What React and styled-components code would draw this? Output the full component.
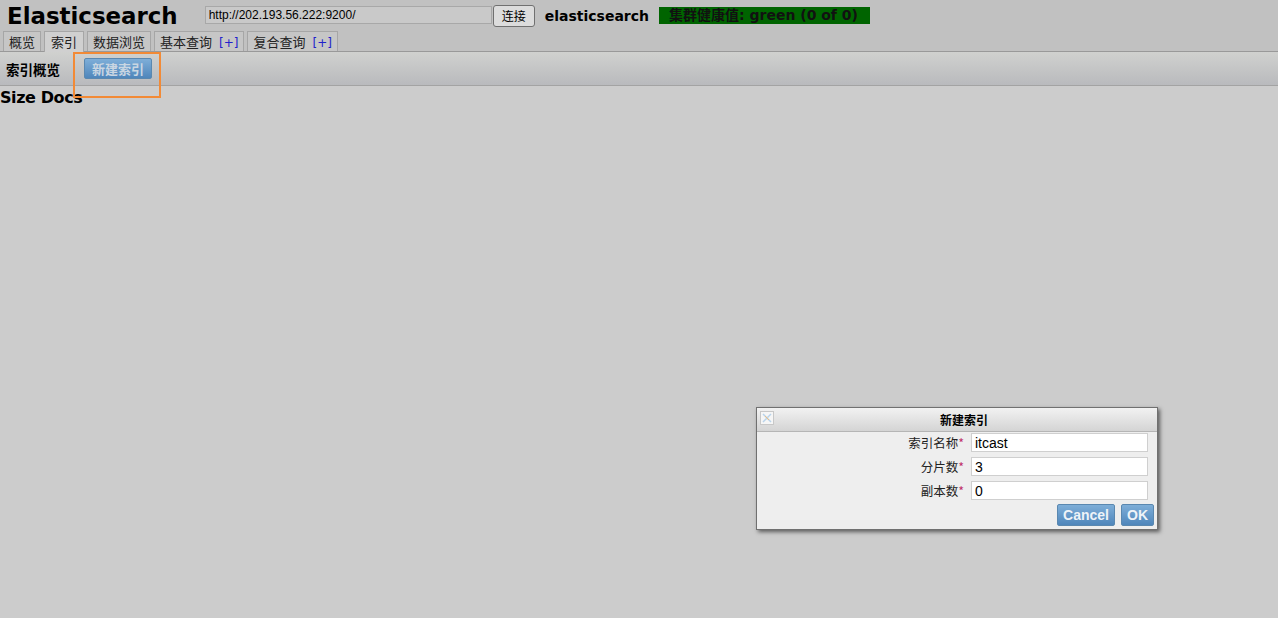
import styled, { createGlobalStyle } from 'styled-components';

const GlobalStyle = createGlobalStyle`
  html, body {
    margin: 0;
    padding: 0;
    background: #cccccc;
    font-family: "DejaVu Sans", Verdana, "Noto Sans CJK SC", sans-serif;
    font-size: 12px;
    color: #000;
  }
  * { box-sizing: border-box; }
`;

const Page = styled.div`
  position: relative;
  width: 1278px;
  height: 618px;
  overflow: hidden;
  background: #cccccc;
`;

const Header = styled.div`
  background: #c1c1c1;
  height: 52px;
  border-bottom: 1px solid #999;
  display: flex;
  flex-direction: column;
`;

const TopRow = styled.div`
  display: flex;
  align-items: center;
  height: 31px;
  padding-left: 7px;
`;

const Logo = styled.h1`
  margin: 0 27px 0 0;
  font-size: 22.9px;
  font-weight: bold;
  line-height: 30px;
`;

const UrlInput = styled.input`
  width: 287px;
  height: 18px;
  padding: 1px 3px;
  border: 1px solid #a8a8a8;
  background: #c9c9c9;
  font-family: "Liberation Sans", Arial, sans-serif;
  font-size: 12px;
  color: #000;
  margin-top: -1px;
`;

const ConnectButton = styled.button`
  height: 22px;
  margin-left: 1px;
  padding: 0 8px;
  border: 1px solid #707070;
  border-radius: 3px;
  background: #dcdcdc;
  font-family: "Noto Sans CJK SC", sans-serif;
  font-size: 12px;
  color: #000;
`;

const ClusterName = styled.span`
  margin-left: 10px;
  font-weight: bold;
  font-size: 14px;
`;

const Health = styled.span`
  margin-left: 10px;
  background: #006400;
  color: #111;
  font-weight: bold;
  font-size: 14px;
  line-height: 17px;
  padding: 0 10px;
  width: 211px;
  white-space: nowrap;
  font-family: "DejaVu Sans", "Noto Sans CJK SC", sans-serif;
`;

const Tabs = styled.div`
  display: flex;
  align-items: flex-end;
  gap: 3px;
  padding-left: 3px;
  height: 20px;
`;

const Tab = styled.div`
  height: ${p => (p.$active ? '21px' : '20px')};
  padding: 0 ${p => (p.$active ? '6px' : '5px')};
  border: 1px solid #a6a6a6;
  border-bottom: none;
  background: ${p => (p.$active ? '#d0d0d0' : '#c6c6c6')};
  font-family: "Noto Sans CJK SC", sans-serif;
  font-size: 13px;
  line-height: 20px;
  color: #222;
  white-space: nowrap;
  margin-bottom: ${p => (p.$active ? '-1px' : '0')};
`;

const Plus = styled.span`
  color: #2222cc;
  font-family: "DejaVu Sans", sans-serif;
  font-size: 12px;
  margin-left: 7px;
`;

const Toolbar = styled.div`
  height: 34px;
  border-bottom: 1px solid #a3a3a3;
  background: linear-gradient(#d0d1cf, #b9babd);
  display: flex;
  align-items: center;
  padding-left: 6px;
  gap: 24px;
`;

const ToolbarTitle = styled.span`
  font-family: "Noto Sans CJK SC", sans-serif;
  font-weight: bold;
  font-size: 13.5px;
  margin-top: 1px;
`;

const BlueButton = styled.button`
  height: ${p => p.$h || 21}px;
  padding: 0 ${p => p.$px || 7}px;
  border: 1px solid #5a88b0;
  border-radius: 2px;
  background: linear-gradient(#7eaed8, #4f86bb);
  color: ${p => (p.$light ? '#eef3f8' : '#c9d6e2')};
  font-family: ${p => (p.$latin ? '"Liberation Sans", Arial' : '"Noto Sans CJK SC"')}, sans-serif;
  font-weight: bold;
  font-size: ${p => (p.$latin ? 14 : 13)}px;
  line-height: 1;
  cursor: pointer;
`;

const Highlight = styled.div`
  position: absolute;
  left: 73px;
  top: 52px;
  width: 88px;
  height: 46px;
  border: 2px solid #f28a36;
  pointer-events: none;
`;

const SizeDocs = styled.div`
  font-weight: bold;
  font-size: 16px;
  line-height: 20px;
  letter-spacing: -0.4px;
  margin-top: 2px;
`;

const Dialog = styled.div`
  position: absolute;
  left: 756px;
  top: 407px;
  width: 402px;
  border: 1px solid #707070;
  background: #eeeeee;
  box-shadow: 2px 2px 4px rgba(0, 0, 0, 0.55);
`;

const DialogHead = styled.div`
  position: relative;
  height: 24px;
  padding-left: 14px;
  background: linear-gradient(#f2f2f2, #d4d4d4);
  border-bottom: 1px solid #b5b5b5;
  display: flex;
  align-items: center;
  justify-content: center;
  font-family: "Noto Sans CJK SC", sans-serif;
  font-weight: bold;
  font-size: 12px;
`;

const CloseBox = styled.div`
  position: absolute;
  left: 3px;
  top: 3px;
  width: 14px;
  height: 14px;
  border: 1px solid #c8c8c8;
  background: #f6f6f6;
  display: flex;
  align-items: center;
  justify-content: center;
`;

const Form = styled.div`
  display: flex;
  flex-direction: column;
  gap: 5px;
  padding: 1px 9px 4px 0;
`;

const Row = styled.div`
  display: grid;
  grid-template-columns: 207px minmax(0, 1fr);
  column-gap: 7px;
  align-items: center;
`;

const Label = styled.label`
  text-align: right;
  font-family: "Noto Sans CJK SC", sans-serif;
  font-size: 12.5px;
  color: #222;
`;

const Star = styled.span`
  color: #c0306a;
`;

const Field = styled.input`
  width: 100%;
  height: 19px;
  padding: 1px 3px;
  border: 1px solid #cfcfcf;
  background: #fff;
  font-family: "Liberation Sans", Arial, sans-serif;
  font-size: 14px;
  color: #000;
`;

const Actions = styled.div`
  display: flex;
  justify-content: flex-end;
  gap: 6px;
  padding: 0 3px 3px 0;
`;

const fields = [
  ['索引名称', 'itcast'],
  ['分片数', '3'],
  ['副本数', '0'],
];

export default function App() {
  return (
    <Page>
      <GlobalStyle />
      <Header>
        <TopRow>
          <Logo>Elasticsearch</Logo>
          <UrlInput defaultValue="http://202.193.56.222:9200/" />
          <ConnectButton>连接</ConnectButton>
          <ClusterName>elasticsearch</ClusterName>
          <Health>集群健康值: green (0 of 0)</Health>
        </TopRow>
        <Tabs>
          <Tab>概览</Tab>
          <Tab $active>索引</Tab>
          <Tab>数据浏览</Tab>
          <Tab>基本查询<Plus>[+]</Plus></Tab>
          <Tab>复合查询<Plus>[+]</Plus></Tab>
        </Tabs>
      </Header>
      <Toolbar>
        <ToolbarTitle>索引概览</ToolbarTitle>
        <BlueButton>新建索引</BlueButton>
      </Toolbar>
      <SizeDocs>Size Docs</SizeDocs>
      <Highlight />
      <Dialog>
        <DialogHead>
          <CloseBox>
            <svg width="10" height="10" viewBox="0 0 10 10">
              <path d="M1 1L9 9M9 1L1 9" stroke="#b9d3ea" strokeWidth="1.5" />
              <path d="M3 3L7 7" stroke="#f0c080" strokeWidth="1" />
            </svg>
          </CloseBox>
          新建索引
        </DialogHead>
        <Form>
          {fields.map(([label, value]) => (
            <Row key={label}>
              <Label>
                {label}
                <Star>*</Star>
              </Label>
              <Field defaultValue={value} />
            </Row>
          ))}
        </Form>
        <Actions>
          <BlueButton $h={22} $px={5} $latin $light>Cancel</BlueButton>
          <BlueButton $h={22} $px={5} $latin $light>OK</BlueButton>
        </Actions>
      </Dialog>
    </Page>
  );
}
